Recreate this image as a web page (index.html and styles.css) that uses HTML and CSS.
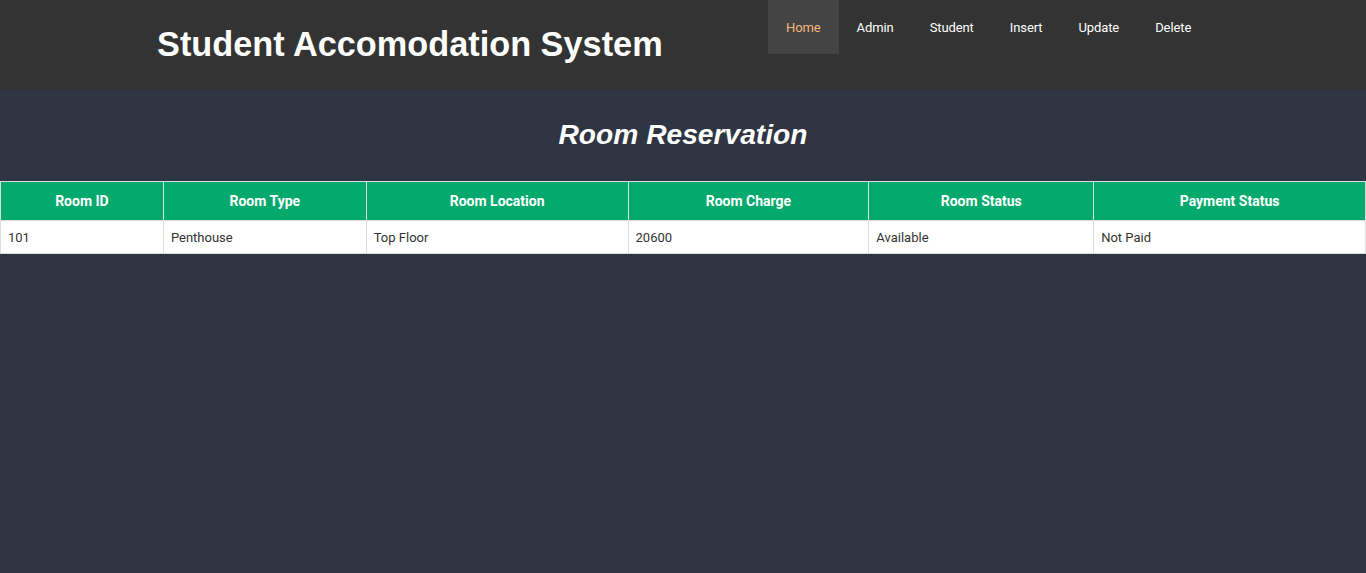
FILE: index.html
```html
<!DOCTYPE html>
<html>
<head>
<meta charset="utf-8">
<link rel="stylesheet" href="styles.css">
</head>
<body>
<header class="topbar">
  <h1 class="site-title">Student Accomodation System</h1>
  <nav class="nav">
    <a class="nav-link active" href="#">Home</a>
    <a class="nav-link" href="#">Admin</a>
    <a class="nav-link" href="#">Student</a>
    <a class="nav-link" href="#">Insert</a>
    <a class="nav-link" href="#">Update</a>
    <a class="nav-link" href="#">Delete</a>
  </nav>
</header>
<main class="content">
  <h2 class="page-title">Room Reservation</h2>
  <table class="rooms">
    <colgroup>
      <col class="c1"><col class="c2"><col class="c3"><col class="c4"><col class="c5"><col class="c6">
    </colgroup>
    <thead>
      <tr>
        <th>Room ID</th>
        <th>Room Type</th>
        <th>Room Location</th>
        <th>Room Charge</th>
        <th>Room Status</th>
        <th>Payment Status</th>
      </tr>
    </thead>
    <tbody>
      <tr>
        <td>101</td>
        <td>Penthouse</td>
        <td>Top Floor</td>
        <td>20600</td>
        <td>Available</td>
        <td>Not Paid</td>
      </tr>
    </tbody>
  </table>
</main>
</body>
</html>
```

FILE: styles.css
```css
html, body {
  margin: 0;
  padding: 0;
}
body {
  background: #2f3542;
  min-height: 573px;
  font-family: Roboto, "Liberation Sans", sans-serif;
}
.topbar {
  background: #333333;
  height: 90px;
  display: flex;
  align-items: flex-start;
  padding-left: 157px;
  box-sizing: border-box;
}
.site-title {
  margin: 0;
  padding-top: 24px;
  font-family: "Liberation Sans", Arial, sans-serif;
  font-weight: bold;
  font-size: 34.3px;
  line-height: 40px;
  color: #ffffff;
  width: 611px;
  white-space: nowrap;
}
.nav {
  display: flex;
}
.nav-link {
  display: block;
  height: 54px;
  box-sizing: border-box;
  padding: 1px 18px 0;
  line-height: 53px;
  font-size: 13px;
  letter-spacing: -0.1px;
  color: #ffffff;
  text-decoration: none;
}
.nav-link.active {
  background: #444444;
  color: #f6b67a;
}
.content {
  padding-top: 29px;
}
.page-title {
  margin: 0 0 32px;
  text-align: center;
  font-family: "Liberation Sans", Arial, sans-serif;
  font-style: italic;
  font-weight: bold;
  font-size: 28.2px;
  line-height: 30px;
  color: #ffffff;
}
.rooms {
  width: 100%;
  border-collapse: collapse;
  font-size: 13px;
}
.c1 { width: 163px; }
.c2 { width: 203px; }
.c3 { width: 262px; }
.c4 { width: 241px; }
.c5 { width: 225px; }
.c6 { width: 272px; }
.rooms th {
  background: #04aa6d;
  color: #ffffff;
  font-weight: bold;
  font-size: 14px;
  height: 38px;
  padding: 0 8px;
  border: 1px solid #dddddd;
  text-align: center;
}
.rooms td {
  background: #ffffff;
  color: #333333;
  height: 32px;
  padding: 0 7px;
  border: 1px solid #dddddd;
  text-align: left;
}
```
